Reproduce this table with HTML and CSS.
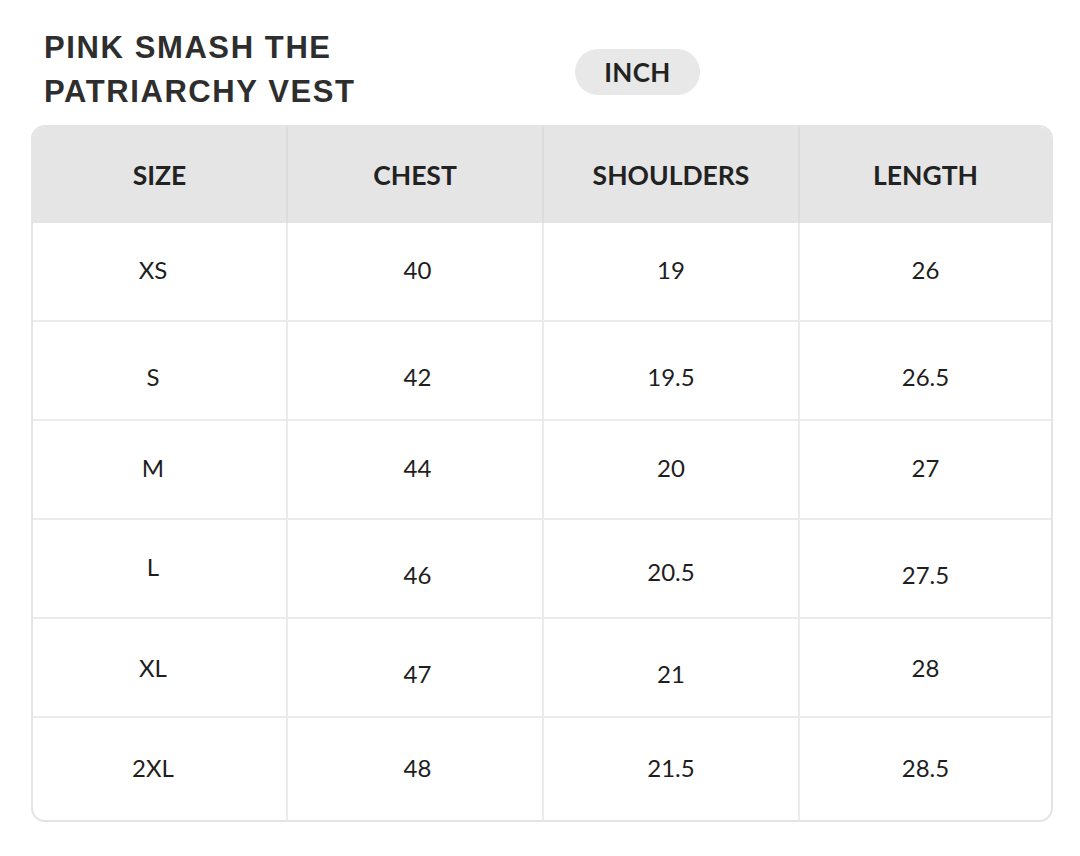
FILE: index.html
```html
<!DOCTYPE html>
<html>
<head>
<meta charset="utf-8">
<link rel="stylesheet" href="styles.css">
</head>
<body>
<div class="page">
  <div class="top">
    <h1 class="title">PINK SMASH THE<br>PATRIARCHY VEST</h1>
    <div class="pill">INCH</div>
  </div>
  <div class="table">
    <div class="row head">
      <div class="cell">SIZE</div><div class="cell">CHEST</div><div class="cell">SHOULDERS</div><div class="cell">LENGTH</div>
    </div>
    <div class="row hi">
      <div class="cell">XS</div><div class="cell">40</div><div class="cell">19</div><div class="cell">26</div>
    </div>
    <div class="row lo">
      <div class="cell">S</div><div class="cell">42</div><div class="cell">19.5</div><div class="cell">26.5</div>
    </div>
    <div class="row hi">
      <div class="cell">M</div><div class="cell">44</div><div class="cell">20</div><div class="cell">27</div>
    </div>
    <div class="row">
      <div class="cell hi">L</div><div class="cell lo">46</div><div class="cell mid">20.5</div><div class="cell lo">27.5</div>
    </div>
    <div class="row">
      <div class="cell">XL</div><div class="cell lo">47</div><div class="cell lo">21</div><div class="cell">28</div>
    </div>
    <div class="row last hi">
      <div class="cell">2XL</div><div class="cell">48</div><div class="cell">21.5</div><div class="cell">28.5</div>
    </div>
  </div>
</div>
</body>
</html>
```
FILE: styles.css
```css
html, body {
  margin: 0;
  padding: 0;
  background: #ffffff;
}
.page {
  width: 1080px;
  height: 856px;
  padding-top: 26px;
  box-sizing: border-box;
}
.top {
  display: flex;
  align-items: flex-start;
  padding-left: 44px;
}
.title {
  margin: 0;
  width: 531px;
  font-family: "Liberation Sans", Arial, sans-serif;
  font-weight: 700;
  font-size: 31px;
  line-height: 44px;
  letter-spacing: 1.6px;
  color: #2e2e2e;
}
.pill {
  margin-top: 23px;
  width: 125px;
  height: 46px;
  border-radius: 23px;
  background: #e8e8e8;
  display: flex;
  align-items: center;
  justify-content: center;
  font-family: Lato, "Noto Sans", sans-serif;
  font-weight: 700;
  font-size: 26px;
  letter-spacing: 0.4px;
  color: #222222;
}
.table {
  margin-top: 11px;
  margin-left: 31px;
  width: 1022px;
  border: 2px solid #e4e4e4;
  border-radius: 14px;
  overflow: hidden;
  box-sizing: border-box;
}
.row {
  display: grid;
  grid-template-columns: 255px 256px 256px 1fr;
  height: 99px;
  border-bottom: 2px solid #ebebeb;
  box-sizing: border-box;
}
.row.last {
  border-bottom: none;
  height: 102px;
}
.row.head {
  background: #e5e5e5;
  height: 96px;
  border-bottom: none;
}
.cell {
  display: flex;
  align-items: center;
  justify-content: center;
  border-right: 2px solid #ebebeb;
  font-family: Lato, "Noto Sans", sans-serif;
  font-size: 24px;
  color: #1e1e1e;
  box-sizing: border-box;
}
.cell:last-child {
  border-right: none;
}
.row:not(.head) .cell:first-child {
  padding-right: 13px;
}
.row:not(.head) .cell:nth-child(2) {
  padding-left: 5px;
}
.head .cell {
  border-right-color: #dcdcdc;
  font-weight: 700;
  font-size: 26.5px;
  color: #222222;
}
.hi .cell, .cell.hi {
  padding-bottom: 4px;
}
.lo .cell, .cell.lo {
  padding-top: 11px;
}
.cell.mid {
  padding-top: 5px;
}
```
